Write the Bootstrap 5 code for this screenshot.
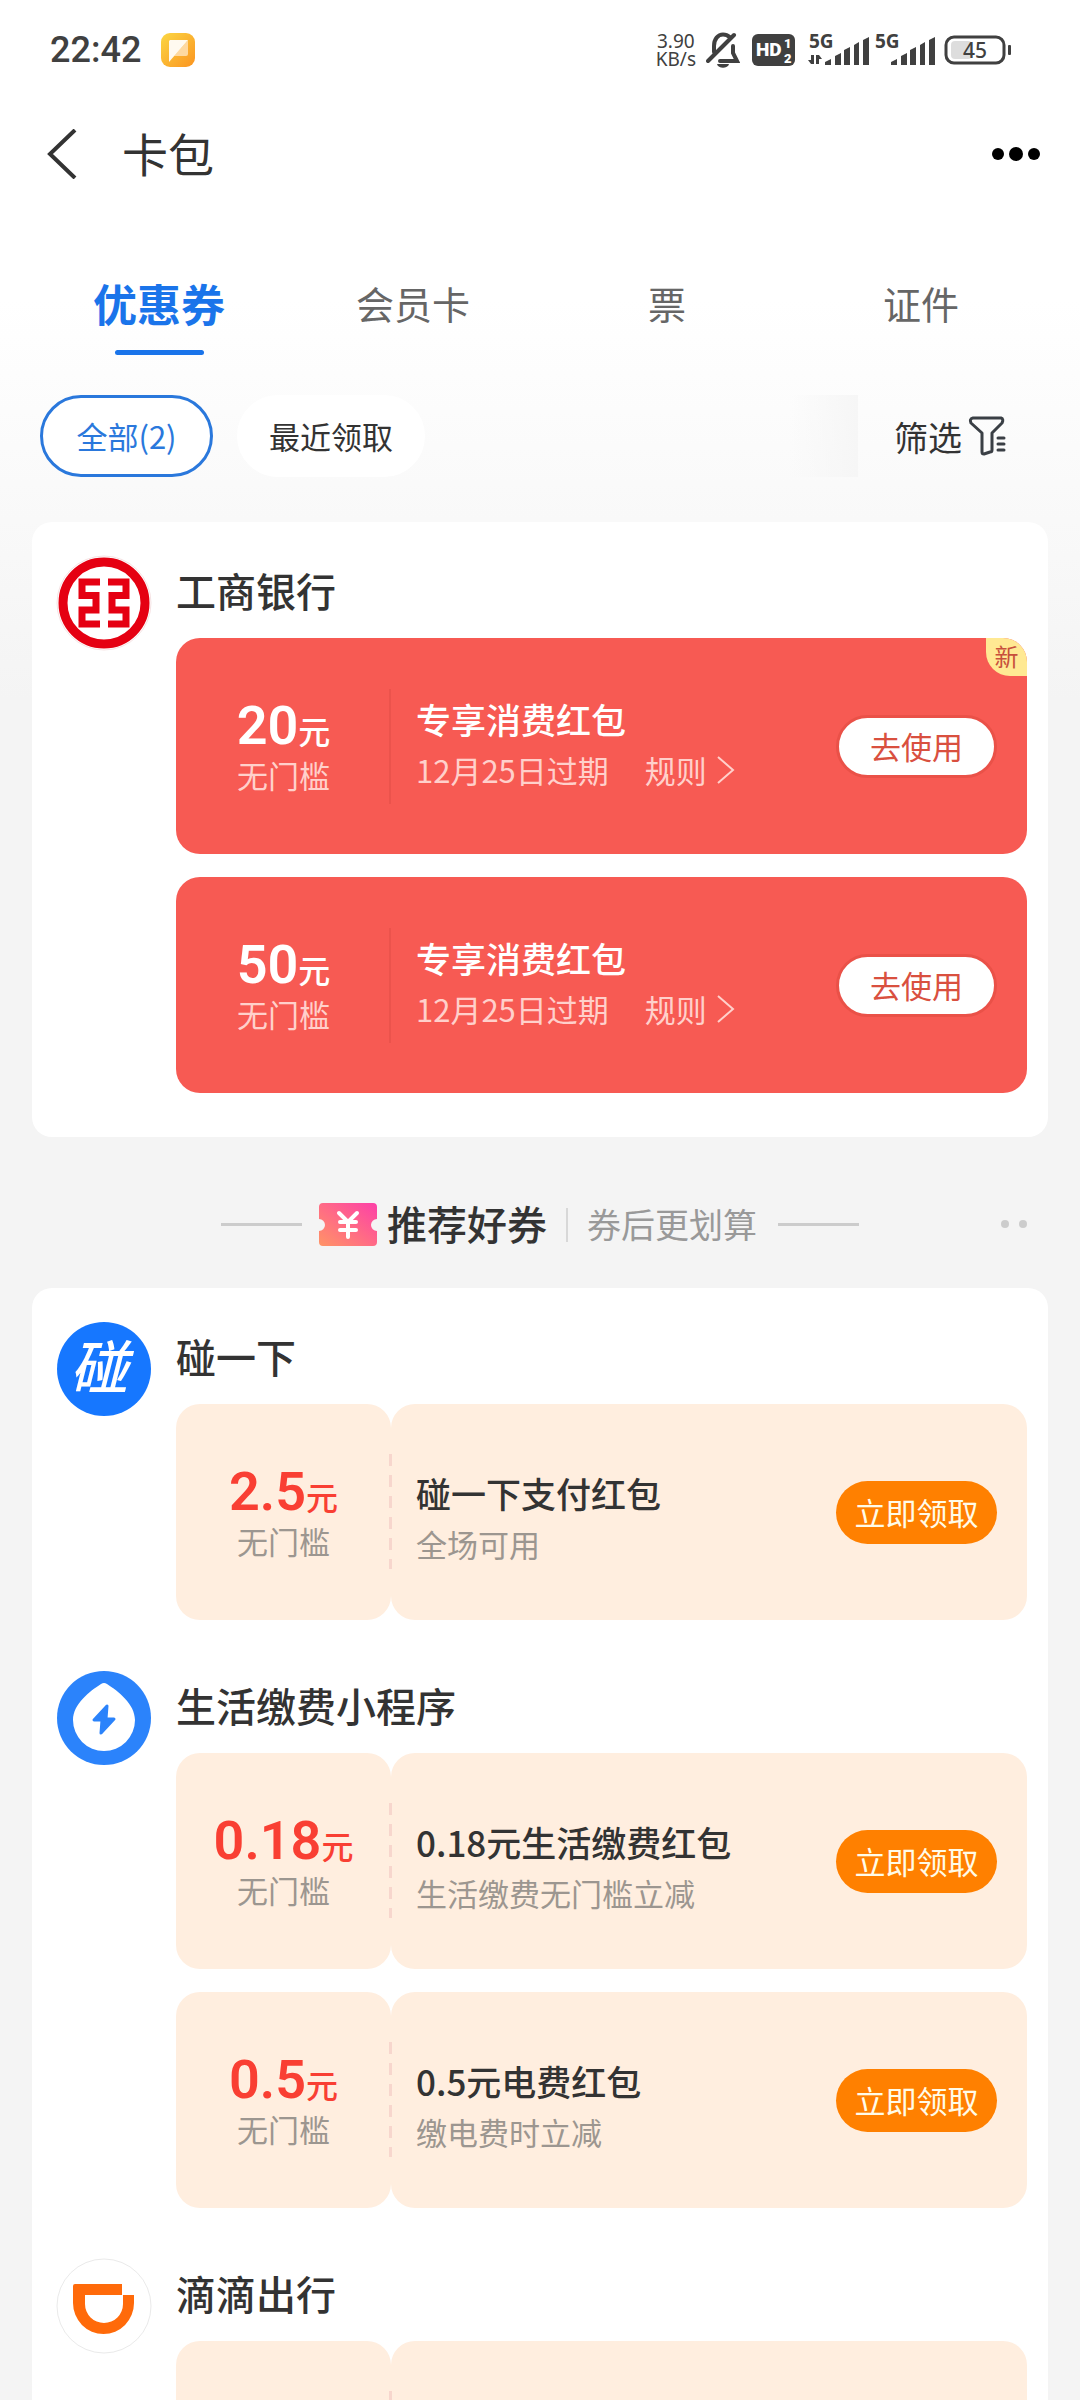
<!DOCTYPE html>
<html lang="zh-CN">
<head>
<meta charset="utf-8">
<meta name="viewport" content="width=device-width, initial-scale=1">
<title>卡包</title>
<link href="https://cdn.jsdelivr.net/npm/bootstrap@5.3.0/dist/css/bootstrap.min.css" rel="stylesheet">
<style>
  body { font-family: "Noto Sans CJK SC", "Noto Sans", sans-serif; color: #333; background: #f4f4f4; }
  .screen { background: linear-gradient(#fff 0, #fff 300px, #f9f9f9 520px, #f4f4f4 700px); }
  a { text-decoration: none; }

  /* status bar */
  .status { height: 100px; padding: 0 68px 0 50px; color: #404040; font-family: Roboto, "Noto Sans", sans-serif; }
  .clock { font-size: 36px; font-weight: 500; line-height: 40px; margin-right: 20px; }
  .speed { font-size: 19px; line-height: 18px; text-align: center; margin-right: 10px; font-family: "Noto Sans", sans-serif; }

  /* title bar */
  .titlebar { height: 108px; padding: 0 36px 0 44px; }
  .titlebar h1 { font-size: 46px; line-height: 56px; font-weight: 400; margin: 0 0 4px 44px; }
  .plain { background: none; border: 0; padding: 0; color: inherit; display: flex; align-items: center; }

  /* category tabs */
  .tabs { padding: 60px 32px 0; }
  .tabs .nav-link { font-size: 38px; line-height: 70px; padding: 0; color: #666; border-radius: 0; }
  .tabs .nav-link.active { font-size: 44px; font-weight: 700; color: #1a74ea; }
  .tabs .nav-link::after { content: ""; display: block; width: 89px; height: 5px; border-radius: 3px; margin: 12px auto 0; }
  .tabs .nav-link.active::after { background: #1a74ea; }

  /* filter chips */
  .filters { padding: 40px 74px 0 40px; margin-bottom: 45px; }
  .chip { height: 82px; min-width: 173px; padding: 0 29px; font-size: 31px; border: 3px solid #fff; border-radius: 41px; background: #fff; color: #333; }
  .chip.on { border-color: #2a78dc; color: #2a78dc; }
  .edge-fade { width: 68px; height: 82px; margin-right: 36px; background: linear-gradient(90deg, rgba(244,244,244,0), #f6f6f6); }
  .sift { font-size: 34px; gap: 6px; }

  /* panels */
  .panel { background: #fff; border-radius: 20px; margin: 0 32px; padding: 33px 21px 44px 24px; }
  .shop { gap: 24px; }
  .shop + .shop { margin-top: 50px; }
  .shop h2 { font-size: 40px; line-height: 70px; font-weight: 500; margin: 0 0 13px; }
  .logo { width: 96px; height: 96px; flex: none; }
  .coupon { height: 216px; position: relative; }
  .coupon + .coupon { margin-top: 23px; }
  .face { flex: 0 0 215px; border-radius: 24px; }
  .detail { border-radius: 24px; padding: 0 30px 0 25px; }
  .amount { font-family: Roboto, "Noto Sans CJK SC", sans-serif; font-size: 54px; line-height: 62px; font-weight: 600; }
  .amount small { font-family: "Noto Sans CJK SC", sans-serif; font-size: 32px; line-height: 32px; font-weight: 500; }
  .note { font-size: 31px; line-height: 36px; padding-bottom: 4px; }
  .name { font-size: 35px; line-height: 51px; font-weight: 500; margin: 0; }
  .hint { font-size: 31px; line-height: 51px; margin: 0; padding-bottom: 4px; }
  .cta { font-size: 31px; line-height: 40px; border: 0; border-radius: 32px; height: 63px; width: 161px; padding: 0; flex: none; }

  .red { background: #f75a53; border-radius: 24px; color: #fff; }
  .red .note, .red .hint, .red .hint a { color: #ffd0cb; }
  .red .cta { background: #fff; color: #d9503f; border: 3px solid #ea5148; }
  .red .rip { width: 2px; height: 115px; background: #eb534c; left: 213px; top: 51px; }
  .hint a { margin-left: 36px; display: inline-flex; align-items: center; gap: 10px; }
  .tag-new { right: 0; top: 0; width: 41px; height: 38px; background: #ffe993; color: #c8503c; font-size: 24px; line-height: 36px; border-radius: 0 24px 0 24px; }

  .peach .face, .peach .detail { background: #ffeedf; }
  .peach .amount { color: #f93f33; }
  .peach .note, .peach .hint { color: #9c9690; }
  .peach .cta { background: #ff8000; color: #fffbe8; }
  .peach .rip { width: 3px; height: 115px; left: 213px; top: 50px; background: repeating-linear-gradient(#f7d6cd 0 12px, transparent 12px 21px); }
  .rip { position: absolute; }

  /* section divider */
  .section { height: 151px; padding-top: 24px; position: relative; }
  .dash { width: 81px; height: 3px; background: #ccc; }
  .section h2 { font-size: 40px; line-height: 50px; font-weight: 500; margin: 0 19px 4px 9px; }
  .section .bar { width: 2px; height: 34px; background: #d8d8d8; margin-right: 19px; }
  .section p { font-size: 34px; line-height: 50px; color: #999; margin: 0 21px 2px 0; }
  .pager { position: absolute; right: 53px; top: 83px; gap: 10px; }
  .pager i { width: 8px; height: 8px; border-radius: 50%; background: #ccc; }
</style>
<script src="https://cdn.jsdelivr.net/npm/bootstrap@5.3.0/dist/js/bootstrap.bundle.min.js"></script>
</head>
<body>
<div class="screen vh-100 overflow-hidden">

  <div class="status d-flex align-items-center">
    <span class="clock">22:42</span>
    <svg width="34" height="34" viewBox="0 0 34 34" aria-hidden="true">
      <defs><linearGradient id="gold" x1="0" y1="0" x2="1" y2="1"><stop offset="0" stop-color="#fbd743"/><stop offset="1" stop-color="#fb9420"/></linearGradient></defs>
      <rect width="34" height="34" rx="9" fill="url(#gold)"/>
      <path d="M27 7v14q0 2-2 2H13z" fill="#fed9a0"/><path d="M9 7h18L8 29V8z" fill="#fffaf0"/>
    </svg>
    <div class="speed ms-auto">3.90<br>KB/s</div>
    <svg width="34" height="36" viewBox="0 0 34 36" fill="none" stroke="#404040" stroke-width="4" stroke-linecap="round" aria-hidden="true">
      <path d="M8 20v-6C8 7 12 2.500 17 2.500c3 0 5 1 6.500 2.500M27 14v7l4 8H14"/><path d="M2 29 28 3"/><path d="M11 32h12c-1 5-11 5-12 0z" fill="#404040" stroke="none"/>
    </svg>
    <svg class="ms-2" width="52" height="34" viewBox="-4 0 52 34" font-family="Roboto" font-weight="900" fill="#fff" aria-hidden="true">
      <rect y="1" width="43" height="32" rx="6" fill="#404040"/>
      <text x="4" y="23" font-size="19">HD</text><text x="32" y="15" font-size="13">1</text><text x="32" y="30" font-size="13">2</text>
    </svg>
    <svg class="ms-2" width="62" height="50" viewBox="0 -8 62 50" fill="#404040" aria-hidden="true">
      <text x="1" y="15" font-family="Noto Sans" font-weight="700" font-size="19">5G</text>
      <path d="M3 22h3v9H3zM0 27h3v4zM8 22h3l3 4h-3v5H8z"/>
      <path d="M17 29l6-3v6h-6zM27 23l6-3v12h-6zM36 17l6-3v18h-6zM46 12l5-3v23h-5zM55 7l6-3v28h-6z"/>
    </svg>
    <svg class="ms-1" width="62" height="50" viewBox="0 -8 62 50" fill="#404040" aria-hidden="true">
      <text x="1" y="15" font-family="Noto Sans" font-weight="700" font-size="19">5G</text>
      <path d="M17 29l6-3v6h-6zM27 23l6-3v12h-6zM36 17l6-3v18h-6zM46 12l5-3v23h-5zM55 7l6-3v28h-6z"/>
    </svg>
    <svg class="ms-2" width="68" height="30" viewBox="0 0 68 30" aria-hidden="true">
      <rect x="2" y="2" width="58" height="26" rx="8" fill="none" stroke="#404040" stroke-width="3"/>
      <rect x="7" y="6" width="21" height="18" rx="4" fill="#ddd"/><rect x="64" y="10" width="3" height="10" rx="1" fill="#404040"/>
      <text x="31" y="23" text-anchor="middle" font-family="Noto Sans" font-weight="500" font-size="21" fill="#404040">45</text>
    </svg>
  </div>

  <header class="titlebar d-flex align-items-center">
    <button class="plain" aria-label="返回"><svg width="34" height="50" viewBox="0 0 34 50" fill="none" stroke="#333" stroke-width="4"><path d="M31 1 6 25l25 24"/></svg></button>
    <h1>卡包</h1>
    <button class="plain ms-auto" aria-label="更多"><svg width="54" height="16" viewBox="0 0 54 16"><circle cx="8" cy="8" r="6"/><circle cx="26" cy="8" r="7"/><circle cx="44" cy="8" r="6"/></svg></button>
  </header>

  <nav class="tabs nav nav-fill" aria-label="卡包分类">
    <a class="nav-link active col-3" href="#" aria-current="page">优惠券</a>
    <a class="nav-link col-3" href="#">会员卡</a>
    <a class="nav-link col-3" href="#">票</a>
    <a class="nav-link col-3" href="#">证件</a>
  </nav>

  <div class="filters d-flex align-items-center">
    <button class="chip on">全部(2)</button>
    <button class="chip ms-4">最近领取</button>
    <div class="edge-fade ms-auto"></div>
    <button class="plain sift">筛选
      <svg width="38" height="40" viewBox="0 0 38 40" fill="none" stroke="#3a3f45" stroke-width="3" stroke-linejoin="round" stroke-linecap="round" aria-hidden="true">
        <path d="M5 2h28q3 1 1 5L24 17v17q0 2-2 2l-6 2q-2 0-2-2V17L3 7Q1 3 5 2z"/><path d="M30 22h6M30 28h6M30 34h6"/>
      </svg>
    </button>
  </div>

  <main>
    <section class="panel">
      <div class="shop d-flex">
        <svg class="logo" viewBox="-48 -48 96 96" fill="none" aria-hidden="true">
          <circle r="47" stroke="#f6e3e4"/><circle r="41" stroke="#e50012" stroke-width="9"/>
          <path d="M-4-21H-22V-7.500H-8V7H-22V21H-4M4-21H22V-7.500H8V7H22V21H4" stroke="#e50012" stroke-width="7"/>
        </svg>
        <div class="flex-grow-1">
          <h2>工商银行</h2>
          <article class="coupon red d-flex">
            <div class="face d-flex flex-column justify-content-center text-center"><div class="amount">20<small>元</small></div><div class="note">无门槛</div></div>
            <div class="rip"></div>
            <div class="detail flex-grow-1 d-flex align-items-center justify-content-between">
              <div><h3 class="name">专享消费红包</h3><p class="hint">12月25日过期<a href="#">规则<svg width="18" height="30" viewBox="0 0 18 30" fill="none" stroke="currentColor" stroke-width="2"><path d="M1 2l15 13L1 28"/></svg></a></p></div>
              <button class="cta">去使用</button>
            </div>
            <span class="tag-new position-absolute text-center">新</span>
          </article>
          <article class="coupon red d-flex">
            <div class="face d-flex flex-column justify-content-center text-center"><div class="amount">50<small>元</small></div><div class="note">无门槛</div></div>
            <div class="rip"></div>
            <div class="detail flex-grow-1 d-flex align-items-center justify-content-between">
              <div><h3 class="name">专享消费红包</h3><p class="hint">12月25日过期<a href="#">规则<svg width="18" height="30" viewBox="0 0 18 30" fill="none" stroke="currentColor" stroke-width="2"><path d="M1 2l15 13L1 28"/></svg></a></p></div>
              <button class="cta">去使用</button>
            </div>
          </article>
        </div>
      </div>
    </section>

    <div class="section d-flex align-items-center justify-content-center">
      <span class="dash"></span>
      <svg class="ms-3" width="60" height="44" viewBox="0 0 60 44" aria-hidden="true">
        <defs><linearGradient id="pink" x1="0" y1="1" x2="1" y2="0"><stop offset="0" stop-color="#ff9466"/><stop offset=".5" stop-color="#ff6a86"/><stop offset="1" stop-color="#fd3fa8"/></linearGradient></defs>
        <path d="M5 0h50q4 0 4 4v12a6 6 0 0 0 0 12v11q0 4-4 4H5q-4 0-4-4V28a6 6 0 0 0 0-12V4q0-4 4-4z" fill="url(#pink)"/>
        <path d="M21 10l9 9 9-9M30 19v15M22 19h16M22 27h16" fill="none" stroke="#fff" stroke-width="4" stroke-linecap="round"/>
      </svg>
      <h2>推荐好券</h2><span class="bar"></span><p>券后更划算</p>
      <span class="dash"></span>
      <div class="pager d-flex"><i></i><i></i></div>
    </div>

    <section class="panel">
      <div class="shop d-flex">
        <svg class="logo" viewBox="-48 -48 96 96" aria-hidden="true"><circle r="47" fill="#1677ff"/><text x="-5" y="20" text-anchor="middle" font-family="Noto Sans CJK SC" font-size="58" font-weight="500" font-style="italic" fill="#fff">碰</text></svg>
        <div class="flex-grow-1">
          <h2>碰一下</h2>
          <article class="coupon peach d-flex">
            <div class="face d-flex flex-column justify-content-center text-center"><div class="amount">2.5<small>元</small></div><div class="note">无门槛</div></div>
            <div class="rip"></div>
            <div class="detail flex-grow-1 d-flex align-items-center justify-content-between">
              <div class="pt-3"><h3 class="name">碰一下支付红包</h3><p class="hint">全场可用</p></div>
              <button class="cta">立即领取</button>
            </div>
          </article>
        </div>
      </div>

      <div class="shop d-flex">
        <svg class="logo" viewBox="-48 -48 96 96" aria-hidden="true"><circle r="47" fill="#2b83fb"/>
          <path d="M-3-34q3-2 6 0C14-27 31-14 31 2a31 31 0 0 1-62 0C-31-14-14-27-3-34z" fill="#fff"/>
          <path d="M3-12-10 2H-2L-3 15 10 1H2z" fill="#2b83fb" stroke="#2b83fb" stroke-width="3" stroke-linejoin="round"/></svg>
        <div class="flex-grow-1">
          <h2>生活缴费小程序</h2>
          <article class="coupon peach d-flex">
            <div class="face d-flex flex-column justify-content-center text-center"><div class="amount">0.18<small>元</small></div><div class="note">无门槛</div></div>
            <div class="rip"></div>
            <div class="detail flex-grow-1 d-flex align-items-center justify-content-between">
              <div class="pt-3"><h3 class="name">0.18元生活缴费红包</h3><p class="hint">生活缴费无门槛立减</p></div>
              <button class="cta">立即领取</button>
            </div>
          </article>
          <article class="coupon peach d-flex">
            <div class="face d-flex flex-column justify-content-center text-center"><div class="amount">0.5<small>元</small></div><div class="note">无门槛</div></div>
            <div class="rip"></div>
            <div class="detail flex-grow-1 d-flex align-items-center justify-content-between">
              <div class="pt-3"><h3 class="name">0.5元电费红包</h3><p class="hint">缴电费时立减</p></div>
              <button class="cta">立即领取</button>
            </div>
          </article>
        </div>
      </div>

      <div class="shop d-flex">
        <svg class="logo" viewBox="-48 -48 96 96" aria-hidden="true"><circle r="47" fill="#fff" stroke="#eaeaea"/>
          <path fill="#ff6a0a" fill-rule="evenodd" d="M-29-22H18V-11H30V-3A30.500 31 0 0 1-31-3V-20q0-2 2-2zM-19-11V-2A19 19 0 0 0 19-2V-11z"/></svg>
        <div class="flex-grow-1">
          <h2>滴滴出行</h2>
          <article class="coupon peach d-flex">
            <div class="face"></div>
            <div class="rip"></div>
            <div class="detail flex-grow-1"></div>
          </article>
        </div>
      </div>
    </section>
  </main>
</div>
</body>
</html>
